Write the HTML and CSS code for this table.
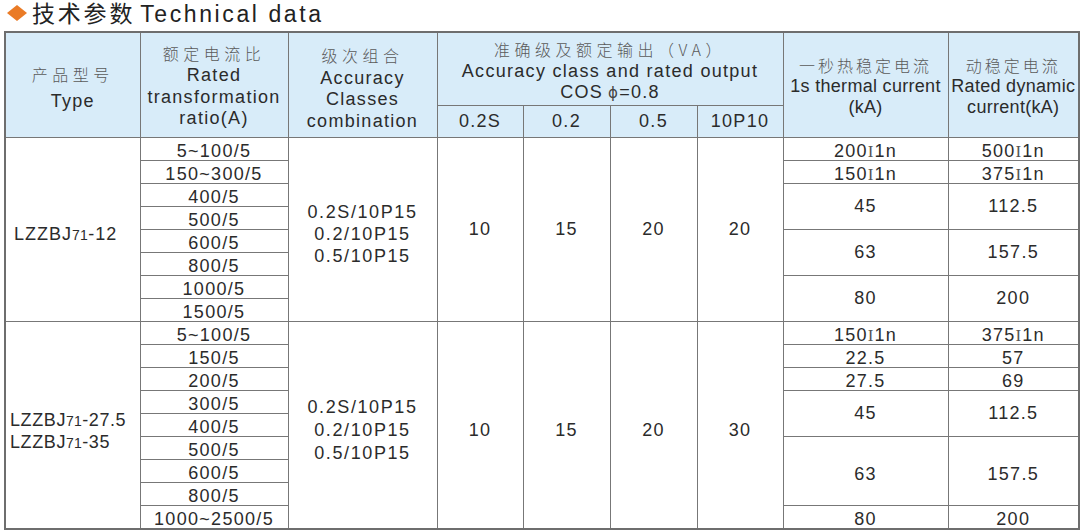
FILE: index.html
```html
<!DOCTYPE html>
<html lang="zh-CN">
<head>
<meta charset="utf-8">
<title>技术参数 Technical data</title>
<link rel="stylesheet" href="styles.css">
</head>
<body>
<h1 class="title"><svg class="diamond" width="20" height="16" viewBox="0 0 20 16"><polygon points="10,0 20,8 10,16 0,8" fill="#ea7b26"/></svg><span class="t-cn">技术参数</span><span class="t-en">Technical data</span></h1>
<table class="spec">
  <colgroup>
    <col class="c1"><col class="c2"><col class="c3"><col class="c4"><col class="c5"><col class="c6"><col class="c7"><col class="c8"><col class="c9">
  </colgroup>
  <thead>
    <tr class="h1">
      <th rowspan="2" class="hd-type"><span class="cn">产品型号</span><br>Type</th>
      <th rowspan="2" class="hd-ratio"><span class="cn">额定电流比</span><br>Rated<br>transformation<br>ratio(A)</th>
      <th rowspan="2" class="hd-acc"><span class="cn">级次组合</span><br>Accuracy<br>Classes<br>combination</th>
      <th colspan="4" class="hd-out"><span class="cn">准确级及额定输出（VA）</span><br>Accuracy class and rated output<br>COS&thinsp;<span class="phi">ϕ</span>=0.8</th>
      <th rowspan="2" class="hd-narrow"><span class="cn cn-n">一秒热稳定电流</span><br>1s thermal current<br>(kA)</th>
      <th rowspan="2" class="hd-narrow"><span class="cn cn-n">动稳定电流</span><br>Rated dynamic<br>current(kA)</th>
    </tr>
    <tr class="h2">
      <th>0.2S</th><th>0.2</th><th>0.5</th><th>10P10</th>
    </tr>
  </thead>
  <tbody>
    <tr>
      <td rowspan="8" class="model m1">LZZBJ<small>71</small>-12</td>
      <td class="s">5~100/5</td>
      <td rowspan="8" class="combo c-g1">0.2S/10P15<br>0.2/10P15<br>0.5/10P15</td>
      <td rowspan="8" class="mid">10</td>
      <td rowspan="8" class="mid">15</td>
      <td rowspan="8" class="mid">20</td>
      <td rowspan="8" class="mid">20</td>
      <td class="s">200<span class="ii">I</span>1n</td>
      <td class="s">500<span class="ii">I</span>1n</td>
    </tr>
    <tr><td class="s">150~300/5</td><td class="s">150<span class="ii">I</span>1n</td><td class="s">375<span class="ii">I</span>1n</td></tr>
    <tr><td class="s">400/5</td><td rowspan="2" class="mid">45</td><td rowspan="2" class="mid">112.5</td></tr>
    <tr><td class="s">500/5</td></tr>
    <tr><td class="s">600/5</td><td rowspan="2" class="mid">63</td><td rowspan="2" class="mid">157.5</td></tr>
    <tr><td class="s">800/5</td></tr>
    <tr><td class="s">1000/5</td><td rowspan="2" class="mid">80</td><td rowspan="2" class="mid">200</td></tr>
    <tr><td class="s">1500/5</td></tr>

    <tr>
      <td rowspan="9" class="model m2">LZZBJ<small>71</small>-27.5<br>LZZBJ<small>71</small>-35</td>
      <td class="s">5~100/5</td>
      <td rowspan="9" class="combo c-g2">0.2S/10P15<br>0.2/10P15<br>0.5/10P15</td>
      <td rowspan="9" class="mid g2">10</td>
      <td rowspan="9" class="mid g2">15</td>
      <td rowspan="9" class="mid g2">20</td>
      <td rowspan="9" class="mid g2">30</td>
      <td class="s">150<span class="ii">I</span>1n</td>
      <td class="s">375<span class="ii">I</span>1n</td>
    </tr>
    <tr><td class="s">150/5</td><td class="s">22.5</td><td class="s">57</td></tr>
    <tr><td class="s">200/5</td><td class="s">27.5</td><td class="s">69</td></tr>
    <tr><td class="s">300/5</td><td rowspan="2" class="mid">45</td><td rowspan="2" class="mid">112.5</td></tr>
    <tr><td class="s">400/5</td></tr>
    <tr><td class="s">500/5</td><td rowspan="3" class="mid g63">63</td><td rowspan="3" class="mid g63">157.5</td></tr>
    <tr><td class="s">600/5</td></tr>
    <tr><td class="s">800/5</td></tr>
    <tr><td class="s">1000~2500/5</td><td class="s">80</td><td class="s">200</td></tr>
  </tbody>
</table>
</body>
</html>
```

FILE: styles.css
```css
html, body {
  margin: 0;
  padding: 0;
  background: #ffffff;
}

body {
  font-family: "Liberation Sans", Arial, "Noto Sans CJK SC", sans-serif;
  color: #2b2b2b;
}

.title {
  height: 28px;
  margin: 0;
  padding-left: 7px;
  font-family: "Liberation Sans", "Noto Sans CJK SC", sans-serif;
  font-weight: normal;
  font-size: 23px;
  line-height: 28px;
  color: #222;
  white-space: nowrap;
}

.diamond {
  display: inline-block;
  vertical-align: 1px;
  margin-right: 5px;
}

.t-cn {
  letter-spacing: 2.8px;
}

.t-en {
  margin-left: 5px;
  letter-spacing: 2.6px;
}

.spec {
  margin-left: 4px;
  margin-top: 3px;
  border-collapse: collapse;
  table-layout: fixed;
  width: 1074px;
  border: 2px solid #6e6e6e;
}

.c1 { width: 135px; }
.c2 { width: 148px; }
.c3 { width: 149px; }
.c4 { width: 86px; }
.c5 { width: 87px; }
.c6 { width: 87px; }
.c7 { width: 86px; }
.c8 { width: 165px; }
.c9 { width: 131px; }

.spec th,
.spec td {
  border: 1px solid #777;
  padding: 0;
  text-align: center;
  font-size: 18px;
  letter-spacing: 1.3px;
  color: #2b2b2b;
  font-weight: normal;
  white-space: nowrap;
  overflow: hidden;
}

.spec th {
  background: #d8ecf9;
  line-height: 21.5px;
  vertical-align: middle;
}

.spec .cn {
  font-family: "Noto Sans CJK SC", sans-serif;
  font-size: 16px;
  letter-spacing: 4.5px;
  color: #5a5a5a;
  font-weight: 300;
}

.spec .cn-n {
  letter-spacing: 3px;
}

.h1 { height: 73px; }
.h2 { height: 32px; }

.h2 th {
  padding-top: 2px;
}

.hd-type {
  line-height: 26px !important;
  padding-top: 6px !important;
}

.hd-ratio {
  padding-top: 3px !important;
}

.hd-acc {
  padding-top: 8px !important;
}

.hd-out {
  line-height: 21px !important;
  padding-top: 4px !important;
}

.hd-narrow {
  letter-spacing: 0.3px !important;
  line-height: 20.5px !important;
  padding-top: 2px !important;
}

.phi {
  font-family: "DejaVu Sans", sans-serif;
  font-size: 15px;
  color: #444;
  line-height: 0;
}

.spec tbody tr {
  height: 23px;
}

.spec td.s {
  line-height: 17px;
  padding-top: 5px;
  vertical-align: middle;
}

.spec td.mid {
  vertical-align: middle;
  line-height: 22px;
}

.spec td.g2 {
  padding-top: 10px;
}

.spec td.g63 {
  padding-top: 6px;
}

.spec td.model {
  text-align: left;
  line-height: 22px;
  vertical-align: middle;
  letter-spacing: 1px;
}

.m1 {
  padding-left: 8px !important;
  padding-top: 10px !important;
}

.m2 {
  padding-left: 4px !important;
  padding-top: 12px !important;
  letter-spacing: 0.6px !important;
}

.model small {
  font-size: 14px;
  letter-spacing: 0.3px;
  line-height: 0;
}

.spec td.combo {
  line-height: 22px;
  vertical-align: middle;
  letter-spacing: 1.6px;
}

.c-g1 {
  padding-top: 10px !important;
}

.c-g2 {
  padding-top: 12px !important;
  line-height: 23px !important;
}

.ii {
  font-family: "Liberation Serif", serif;
  font-size: 17px;
  color: #555;
  letter-spacing: 1px;
  line-height: 0;
}
```
